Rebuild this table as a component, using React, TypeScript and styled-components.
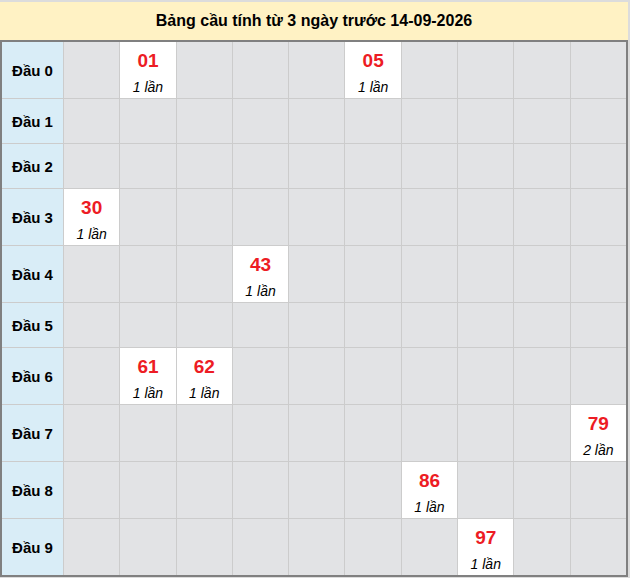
import React from "react";
import styled, { createGlobalStyle } from "styled-components";

const GlobalStyle = createGlobalStyle`
  html, body {
    margin: 0;
    padding: 0;
    background: #ffffff;
  }
  body {
    font-family: "Liberation Sans", Arial, sans-serif;
  }
`;

const Frame = styled.div`
  width: 628px;
  border-top: 2px solid #dcdcdc;
  border-right: 2px solid #dcdcdc;
  border-bottom: 1px solid #dcdcdc;
`;

const Header = styled.div`
  height: 38px;
  background: #fff2c4;
  display: flex;
  align-items: center;
  justify-content: center;
  font-weight: bold;
  font-size: 16px;
  color: #000;
`;

const Table = styled.div`
  border: 2px solid #808080;
  background: #cccccc;
  display: flex;
  flex-direction: column;
  gap: 1px;
`;

const Row = styled.div<{ $tall: boolean }>`
  display: grid;
  grid-template-columns: 61px repeat(10, 1fr);
  gap: 1px;
  height: ${(p) => (p.$tall ? 56 : 44)}px;
`;

const Label = styled.div`
  background: #d9edf7;
  display: flex;
  align-items: center;
  justify-content: center;
  font-weight: bold;
  font-size: 15px;
  color: #000;
`;

const Cell = styled.div<{ $filled: boolean }>`
  background: ${(p) => (p.$filled ? "#ffffff" : "#e2e3e5")};
  display: flex;
  flex-direction: column;
  align-items: center;
  padding-top: 7px;
  box-sizing: border-box;
`;

const Num = styled.div`
  color: #ed1c24;
  font-weight: bold;
  font-size: 19px;
  line-height: 24px;
`;

const Count = styled.div`
  font-style: italic;
  font-size: 14px;
  line-height: 20px;
  margin-top: 4px;
  color: #000;
`;

const data: Record<number, { n: string; c: number }[]> = {
  0: [{ n: "01", c: 1 }, { n: "05", c: 1 }],
  3: [{ n: "30", c: 1 }],
  4: [{ n: "43", c: 1 }],
  6: [{ n: "61", c: 1 }, { n: "62", c: 1 }],
  7: [{ n: "79", c: 2 }],
  8: [{ n: "86", c: 1 }],
  9: [{ n: "97", c: 1 }],
};

export default function App() {
  return (
    <>
      <GlobalStyle />
      <Frame>
        <Header>Bảng cầu tính từ 3 ngày trước 14-09-2026</Header>
        <Table>
          {Array.from({ length: 10 }, (_, r) => {
            const items = data[r] || [];
            return (
              <Row key={r} $tall={items.length > 0}>
                <Label>Đầu {r}</Label>
                {Array.from({ length: 10 }, (_, c) => {
                  const it = items.find((x) => Number(x.n[1]) === c);
                  return (
                    <Cell key={c} $filled={!!it}>
                      {it && (
                        <>
                          <Num>{it.n}</Num>
                          <Count>{it.c} lần</Count>
                        </>
                      )}
                    </Cell>
                  );
                })}
              </Row>
            );
          })}
        </Table>
      </Frame>
    </>
  );
}
